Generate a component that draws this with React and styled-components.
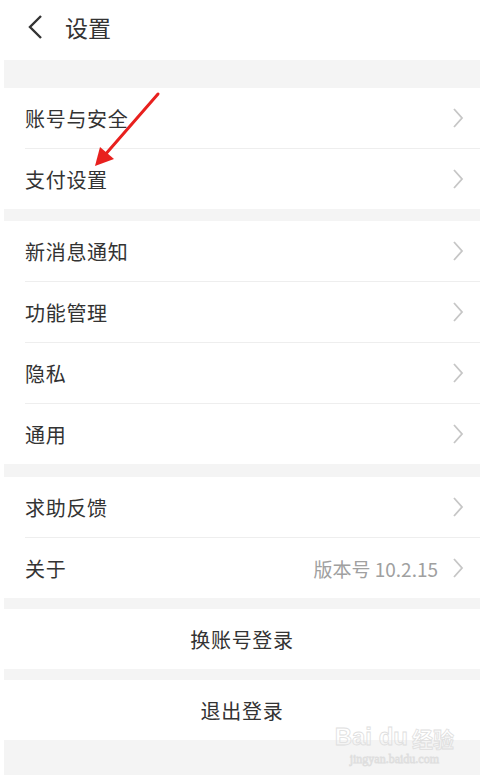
import React from "react";
import styled, { createGlobalStyle } from "styled-components";

const GlobalStyle = createGlobalStyle`
  html, body {
    margin: 0;
    padding: 0;
    background: #ffffff;
    font-family: "Noto Sans CJK SC", "Noto Sans", sans-serif;
  }
`;

export const Page = styled.div`
  position: relative;
  width: 480px;
  height: 775px;
  overflow: hidden;
  background: #ffffff;
  padding-left: 4px;
  box-sizing: border-box;
  display: flex;
  flex-direction: column;
`;

export const Header = styled.div`
  height: 60px;
  box-sizing: border-box;
  padding: 0 0 6px 23px;
  display: flex;
  align-items: center;
  gap: 22px;
  background: #ffffff;
`;

export const Title = styled.div`
  font-size: 23px;
  color: #333333;
  line-height: 1;
`;

export const Band = styled.div`
  height: ${(p) => p.h}px;
  background: #f4f4f4;
  flex: ${(p) => (p.grow ? 1 : "none")};
`;

export const Group = styled.div`
  background: #ffffff;
  display: flex;
  flex-direction: column;
`;

export const Row = styled.div`
  height: 60px;
  margin-left: 21px;
  padding-right: 16px;
  display: flex;
  align-items: center;
  border-top: ${(p) => (p.first ? "none" : "1px solid #eeeeee")};
`;

export const Label = styled.div`
  flex: 1;
  font-size: 20px;
  color: #333333;
  letter-spacing: 0.7px;
`;

export const Extra = styled.div`
  font-size: 19px;
  color: #a0a0a0;
  margin-right: 14px;
`;

export const Button = styled.div`
  height: 60px;
  background: #ffffff;
  display: flex;
  align-items: center;
  justify-content: center;
  font-size: 20px;
  color: #333333;
  letter-spacing: 0.7px;
`;

export const Overlay = styled.svg`
  position: absolute;
  left: 0;
  top: 0;
  pointer-events: none;
`;

export const Watermark = styled.div`
  position: absolute;
  right: 26px;
  bottom: 8px;
  display: flex;
  flex-direction: column;
  align-items: center;
  color: transparent;
  -webkit-text-stroke: 0.8px #dedede;
  font-family: "Liberation Sans", sans-serif;
  pointer-events: none;
`;

export const MarkTop = styled.div`
  font-size: 24px;
  font-weight: bold;
  line-height: 1;
  display: flex;
  align-items: flex-end;
  span {
    font-family: "Noto Sans CJK SC", sans-serif;
    font-size: 21px;
    margin-left: 4px;
  }
`;

export const MarkBottom = styled.div`
  font-size: 12px;
  font-family: "Liberation Serif", serif;
  margin-top: 3px;
`;

const Chevron = () => (
  <svg width="12" height="22" viewBox="0 0 12 22">
    <path d="M2 2 L10 11 L2 20" fill="none" stroke="#c6c6c6" strokeWidth="1.8" />
  </svg>
);

const Back = () => (
  <svg width="16" height="26" viewBox="0 0 16 26">
    <path d="M14 2 L3 13 L14 24" fill="none" stroke="#333333" strokeWidth="2.4" />
  </svg>
);

const ListRow = ({ label, extra, first }) => (
  <Row first={first}>
    <Label>{label}</Label>
    {extra && <Extra>{extra}</Extra>}
    <Chevron />
  </Row>
);

const groups = [
  ["账号与安全", "支付设置"],
  ["新消息通知", "功能管理", "隐私", "通用"],
];

export default function App() {
  return (
    <>
      <GlobalStyle />
      <Page>
        <Header>
          <Back />
          <Title>设置</Title>
        </Header>
        <Band h={28} />
        <Group>
          {groups[0].map((l, i) => (
            <ListRow key={l} label={l} first={i === 0} />
          ))}
        </Group>
        <Band h={12} />
        <Group>
          {groups[1].map((l, i) => (
            <ListRow key={l} label={l} first={i === 0} />
          ))}
        </Group>
        <Band h={13} />
        <Group>
          <ListRow label="求助反馈" first />
          <ListRow label="关于" extra="版本号 10.2.15" />
        </Group>
        <Band h={11} />
        <Button>换账号登录</Button>
        <Band h={11} />
        <Button>退出登录</Button>
        <Band grow />
        <Overlay width="480" height="775">
          <line x1="158" y1="94" x2="104" y2="156" stroke="#e8201e" strokeWidth="3" strokeLinecap="round" />
          <polygon points="95,166 100,147 114,159" fill="#e8201e" />
        </Overlay>
        <Watermark>
          <MarkTop>
            Bai du<span>经验</span>
          </MarkTop>
          <MarkBottom>jingyan.baidu.com</MarkBottom>
        </Watermark>
      </Page>
    </>
  );
}
